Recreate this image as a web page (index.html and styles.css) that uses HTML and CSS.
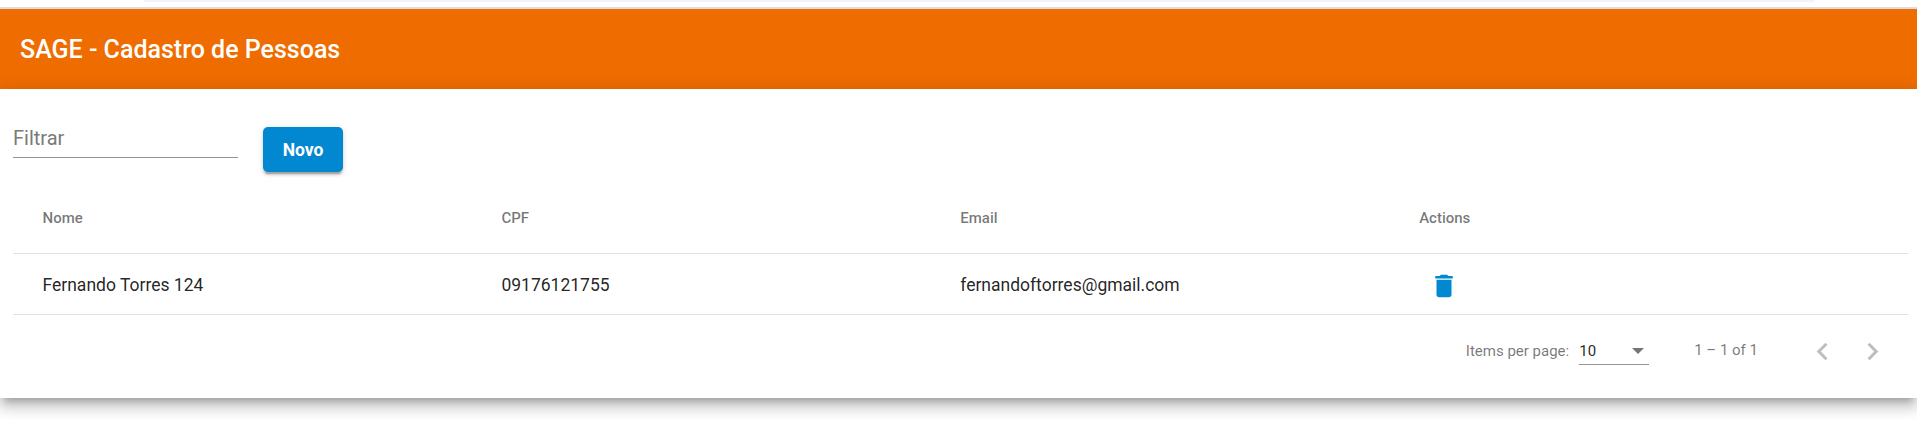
FILE: index.html
```html
<!DOCTYPE html>
<html lang="pt-BR">
<head>
<meta charset="utf-8">
<title>SAGE - Cadastro de Pessoas</title>
<link rel="stylesheet" href="styles.css">
</head>
<body>
<div class="browser-edge"><div class="address-bar"></div></div>
<header class="toolbar"><h1 class="title">SAGE - Cadastro de Pessoas</h1></header>
<main class="card">
  <div class="actions-bar">
    <label class="filter"><input class="filter-input" type="text" placeholder="Filtrar"></label>
    <button class="new-button" type="button">Novo</button>
  </div>
  <div class="table">
    <div class="row row-head">
      <span>Nome</span><span>CPF</span><span>Email</span><span>Actions</span>
    </div>
    <div class="row row-data">
      <span>Fernando Torres 124</span><span>09176121755</span><span>fernandoftorres@gmail.com</span>
      <span class="cell-action"><svg class="trash" viewBox="0 0 24 24"><path d="M6 19c0 1.100.9 2 2 2h8c1.100 0 2-.9 2-2V7H6v12zM19 4h-3.500l-1-1h-5l-1 1H5v2h14V4z"/></svg></span>
    </div>
  </div>
  <div class="paginator">
    <span class="page-label">Items per page:</span>
    <div class="page-size"><span>10</span><i class="arrow"></i></div>
    <span class="range">1 – 1 of 1</span>
    <svg class="chevron" viewBox="0 0 24 24"><path d="M15.410 7.410L14 6l-6 6 6 6 1.410-1.410L10.830 12z"/></svg>
    <svg class="chevron" viewBox="0 0 24 24"><path d="M10 6L8.590 7.410 13.170 12l-4.580 4.590L10 18l6-6z"/></svg>
  </div>
</main>
</body>
</html>
```
FILE: styles.css
```css
* { box-sizing: border-box; }
body {
  margin: 0;
  height: 440px;
  overflow: hidden;
  background: #fff;
  color: rgba(0, 0, 0, .87);
  font-family: Roboto, sans-serif;
}
.browser-edge {
  height: 9px;
  padding: 0 102px 0 144px;
  border-bottom: 2px solid #dadce0;
}
.address-bar {
  height: 2px;
  background: #f1f3f4;
  border-radius: 0 0 8px 8px;
}
.toolbar {
  height: 80px;
  padding: 2px 20px 0;
  display: flex;
  align-items: center;
  background: #ef6c00;
}
.title {
  margin: 0;
  color: #fff;
  font-size: 25px;
  font-weight: 500;
  line-height: 40px;
}
.card {
  position: relative;
  height: 309px;
  padding: 0 9px 13px 13px;
  background: #fff;
  box-shadow: 0 6.250px 6.250px -3.750px rgba(0, 0, 0, .2),
    0 10px 12.500px 1.250px rgba(0, 0, 0, .14),
    0 3.750px 17.500px 2.500px rgba(0, 0, 0, .12);
}
.actions-bar {
  height: 95px;
  padding-top: 38px;
  display: flex;
  align-items: flex-start;
  gap: 25px;
}
.filter {
  width: 225px;
  height: 31px;
  border-bottom: 1px solid #949494;
}
.filter-input {
  display: block;
  width: 100%;
  height: 23px;
  padding: 0;
  border: 0;
  outline: 0;
  background: none;
  font: 400 20px/23px Roboto, sans-serif;
}
.filter-input::placeholder { color: #7a7a7a; opacity: 1; }
.new-button {
  width: 80px;
  height: 45px;
  padding: 2px 0 0;
  border: 0;
  border-radius: 5px;
  background: #0288d1;
  color: #fff;
  font: 700 17.500px/43px Roboto, sans-serif;
  box-shadow: 0 3.750px 1.250px -2.500px rgba(0, 0, 0, .2),
    0 2.500px 2.500px rgba(0, 0, 0, .14),
    0 1.250px 6.250px rgba(0, 0, 0, .12);
}
.row {
  display: grid;
  grid-template-columns: repeat(4, 1fr);
  align-items: center;
  padding: 0 30px 0 29.500px;
  border-bottom: 1px solid #e0e0e0;
}
.row-head {
  height: 70px;
  padding-bottom: 2px;
  color: rgba(0, 0, 0, .54);
  font-size: 15px;
  font-weight: 500;
}
.row-data { height: 61px; padding-top: 2px; font-size: 17.500px; }
.cell-action { display: flex; padding: 1px 0 0 9.500px; }
.trash { width: 30px; height: 30px; fill: #0288d1; }
.paginator {
  height: 70px;
  padding: 2px 18px 0 0;
  display: flex;
  align-items: center;
  justify-content: flex-end;
  color: rgba(0, 0, 0, .54);
  font-size: 15px;
}
.page-size {
  width: 70px;
  height: 30px;
  margin: 0 45px 2px 10px;
  padding: 3px 5px 0 0;
  display: flex;
  align-items: center;
  justify-content: space-between;
  border-bottom: 1px solid #949494;
  color: rgba(0, 0, 0, .87);
}
.arrow {
  margin-bottom: 1px;
  border: 6px solid transparent;
  border-top-color: #757575;
  border-bottom: 0;
}
.range { margin: 0 32px 2px 0; }
.chevron { width: 35px; height: 35px; margin-left: 15px; fill: #bdbdbd; }
```
